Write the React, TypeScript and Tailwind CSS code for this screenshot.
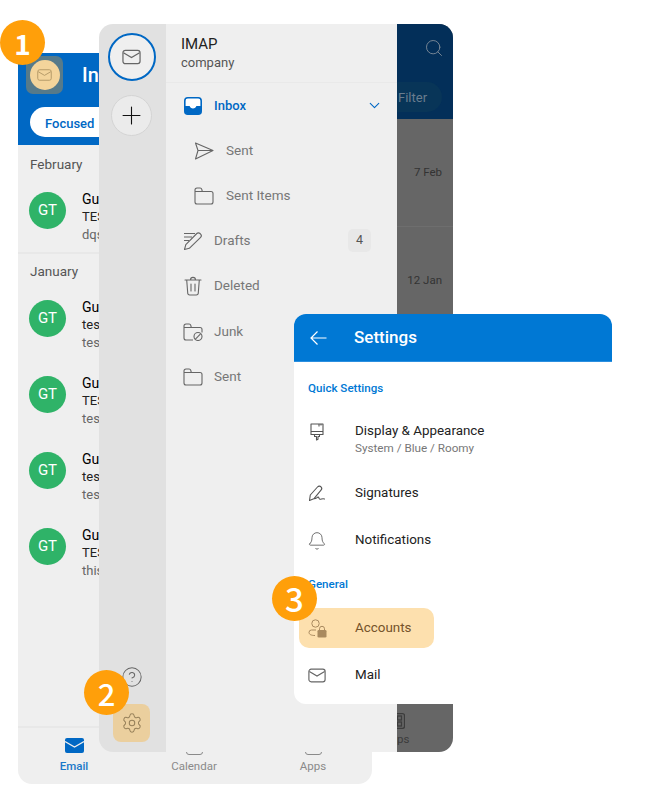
import React from 'react';
import { Bell, ChevronDown, CircleHelp, Plus, Search, Settings } from 'lucide-react';

// Small outline icons that the icon packages don't have in this shape
const MailIcon = ({ className }: { className?: string }) => (
  <svg viewBox="0 0 20 16" fill="none" stroke="currentColor" strokeWidth="1.3" className={className}>
    <rect x="1" y="1" width="18" height="14" rx="2.5" />
    <path d="M1.5 3.5 10 8.5l8.5-5" />
  </svg>
);

const InboxIcon = () => (
  <svg viewBox="0 0 18 18" className="w-[18px] h-[18px] text-[#0068c4]">
    <rect x="0.8" y="0.8" width="16.4" height="16.4" rx="3" fill="#fff" stroke="currentColor" strokeWidth="1.6" />
    <path d="M1 9h4.6c.5 1.6 1.7 2.4 3.4 2.4s2.900-.8 3.400-2.400H17v5.500a2.500 2.500 0 0 1-2.500 2.500h-11A2.500 2.500 0 0 1 1 14.500z" fill="currentColor" />
  </svg>
);

const SendIcon = () => (
  <svg viewBox="0 0 20 18" fill="none" stroke="currentColor" strokeWidth="1.1" strokeLinejoin="round" className="w-5 h-[18px]">
    <path d="M1.500 1 19 8.500 1.500 17l2.500-8.500zM4 8.500h15" />
  </svg>
);

const FolderIcon = () => (
  <svg viewBox="0 0 20 18" fill="none" stroke="currentColor" strokeWidth="1.1" className="w-5 h-[18px]">
    <path d="M1 4.500V3a2 2 0 0 1 2-2h3.200c.8 0 1.300.5 1.500 1.200l.6 2.300H17a2 2 0 0 1 2 2V15a2 2 0 0 1-2 2H3a2 2 0 0 1-2-2zh7.300" />
  </svg>
);

const DraftsIcon = () => (
  <svg viewBox="0 0 20 20" fill="none" stroke="currentColor" strokeWidth="1.1" strokeLinejoin="round" className="w-5 h-5">
    <path d="M1 2.500h11M1 6h8M1 9.500h5M1.500 18.500l1.300-4.800L13.800 2.500c.9-.9 2.300-.9 3.200 0l.6.6c.9.9.9 2.300 0 3.200L6.300 17.300z" />
  </svg>
);

const TrashIcon = () => (
  <svg viewBox="0 0 18 20" fill="none" stroke="currentColor" strokeWidth="1.1" strokeLinecap="round" className="w-[18px] h-5">
    <path d="M1 4h16M6.500 4c0-3.500 5-3.500 5 0M2.700 4l1 12.800A2 2 0 0 0 5.700 19h6.600a2 2 0 0 0 2-2.200l1-12.800M7 8v7M11 8v7" />
  </svg>
);

const JunkIcon = () => (
  <svg viewBox="0 0 20 18" fill="none" stroke="currentColor" strokeWidth="1.1" className="w-5 h-[18px]">
    <path d="M10 17H3a2 2 0 0 1-2-2V3a2 2 0 0 1 2-2h3.200c.8 0 1.300.5 1.500 1.200l.6 2.300H17a2 2 0 0 1 2 2v3M1 4.500h7.300" />
    <circle cx="15" cy="13.500" r="4" />
    <path d="m12.200 16.300 5.600-5.600" />
  </svg>
);

const BrushIcon = () => (
  <svg viewBox="0 0 14 18" fill="none" stroke="currentColor" strokeWidth="1.1" strokeLinejoin="round" className="w-[14px] h-[18px]">
    <path d="M1 1h12v10.500H1zM1 8.500h12M4.500 11.500v2h2v3.500l1.500-.8v-2.700h1.500v-2M9 1v2.500M11 1v1.500" />
  </svg>
);

const SignatureIcon = () => (
  <svg viewBox="0 0 18 17" fill="none" stroke="currentColor" strokeWidth="1.1" strokeLinejoin="round" strokeLinecap="round" className="w-[18px] h-[17px]">
    <path d="M1.500 15.500 2.300 10 9.500 2c1-1.100 2.500-1.200 3.500-.2s.9 2.400 0 3.400L5.800 13.800zM5.800 13.800C8 14 9 12.500 10 12c1-.4.600 2 2 2.300 1.400.2 2-1 4.500-.3" />
  </svg>
);

const AccountLockIcon = () => (
  <svg viewBox="0 0 19 19" className="w-[19px] h-[19px]">
    <circle cx="7.500" cy="4.500" r="3.700" fill="none" stroke="currentColor" strokeWidth="1" />
    <path d="M8 11H3.500A2.500 2.500 0 0 0 1 13.500c0 2 2.500 3 6 3" fill="none" stroke="currentColor" strokeWidth="1" />
    <rect x="9.500" y="11" width="9" height="7.500" rx="1.300" fill="currentColor" />
    <path d="M11.500 11V9.800a2.500 2.500 0 0 1 5 0V11" fill="none" stroke="currentColor" strokeWidth="1" />
  </svg>
);

const Badge = ({ n, className }: { n: number; className: string }) => (
  <div className={`absolute w-[45px] h-[45px] rounded-full bg-[#ff9f0a] text-white flex items-center justify-center leading-none font-['Noto_Sans_CJK_KR',sans-serif] ${className}`}>
    {n}
  </div>
);

const mails = [
  { month: 'February', rows: [['TES', 'dqs']] },
  { month: 'January', rows: [['tes', 'tes'], ['TES', 'tes'], ['tes', 'tes'], ['TES', 'this']] },
];

const folders = [
  { name: 'Inbox', icon: <InboxIcon />, active: true },
  { name: 'Sent', icon: <SendIcon />, sub: true },
  { name: 'Sent Items', icon: <FolderIcon />, sub: true },
  { name: 'Drafts', icon: <DraftsIcon />, count: 4 },
  { name: 'Deleted', icon: <TrashIcon /> },
  { name: 'Junk', icon: <JunkIcon />, nudge: true },
  { name: 'Sent', icon: <FolderIcon /> },
];

function MailList() {
  return (
    <div className="absolute left-[18px] top-[53px] w-[354px] h-[731px] bg-[#efefef] rounded-b-[14px] flex flex-col overflow-hidden">
      <div className="h-[92px] bg-[#0068c4] shrink-0 relative">
        <div className="absolute left-[8px] top-[3px] w-[37px] h-[38px] rounded-[7px] bg-[#567a8a] flex items-center justify-center">
          <div className="w-[30px] h-[30px] rounded-full bg-[#f3d49b] flex items-center justify-center text-[#b49a68]">
            <MailIcon className="w-[15px] h-[12px]" />
          </div>
        </div>
        <div className="absolute left-[64px] top-[10px] text-white text-[20px] font-medium leading-[24px]">In</div>
        <div className="absolute left-[12px] top-[54px] w-[90px] h-[30px] rounded-full bg-white pl-[15px] pt-[3px] flex items-center text-[#0068c4] text-[13px] font-medium">
          Focused
        </div>
      </div>
      <div className="flex-1 flex flex-col">
        {mails.map((group, i) => (
          <div key={group.month} className={i > 0 ? 'border-t-2 border-[#e8e8e8]' : ''}>
            <div className={`pl-[12px] text-[13.500px] leading-[18px] text-[#555] ${i > 0 ? 'h-[36px] pt-[8px]' : 'h-[37px] pt-[10px]'}`}>{group.month}</div>
            {group.rows.map((row, j) => (
              <div key={j} className={`flex items-start pl-[11px] pt-[10px] ${i > 0 ? 'h-[76px]' : 'h-[70px]'}`}>
                <div className="w-[37px] h-[37px] rounded-full bg-[#2fb368] text-white text-[15px] flex items-center justify-center shrink-0">GT</div>
                <div className="ml-[16px] -mt-[2px] text-[14px] leading-[18px]">
                  <div className="text-black">Gu</div>
                  <div className="text-[#222] text-[13px]">{row[0]}</div>
                  <div className="text-[#666] text-[13px]">{row[1]}</div>
                </div>
              </div>
            ))}
          </div>
        ))}
      </div>
      <div className="h-[58px] border-t-2 border-[#e8e8e8] flex shrink-0 text-[11.500px] pt-[10px]">
        <div className="w-[112px] flex flex-col items-center text-[#1a78c9] font-medium">
          <svg viewBox="0 0 19 15" className="w-[19px] h-[15px]">
            <rect width="19" height="15" rx="2" fill="#0068c4" />
            <path d="M0 3.500 9.500 9 19 3.500" fill="none" stroke="#efefef" strokeWidth="1.300" />
          </svg>
          <span className="leading-[16px] mt-[5px]">Email</span>
        </div>
        <div className="w-[128px] flex flex-col items-center text-[#8a8a8a]">
          <div className="w-[17px] h-[17px] border border-[#8a8a8a] rounded-[3px]" />
          <span className="leading-[16px] mt-[3px]">Calendar</span>
        </div>
        <div className="w-[110px] flex flex-col items-center text-[#8a8a8a]">
          <div className="w-[17px] h-[17px] border border-[#8a8a8a] rounded-[3px]" />
          <span className="leading-[16px] mt-[3px]">Apps</span>
        </div>
      </div>
    </div>
  );
}

function Drawer() {
  return (
    <div className="absolute left-[99px] top-[24px] w-[354px] h-[728px] rounded-[14px] overflow-hidden flex">
      <div className="w-[67px] bg-[#e1e1e1] flex flex-col items-center pt-[9px] pb-[10px] pr-[2px] shrink-0">
        <div className="w-[48px] h-[48px] rounded-full border-2 border-[#0068c4] bg-[#efefef] flex items-center justify-center text-[#666]">
          <MailIcon className="w-[19px] h-[16px]" />
        </div>
        <div className="mt-[14px] w-[41px] h-[41px] rounded-full border border-[#d4d4d4] bg-[#ebebeb] flex items-center justify-center text-[#111]">
          <Plus size={29} strokeWidth={0.9} />
        </div>
        <CircleHelp size={22} strokeWidth={1.1} className="mt-auto text-[#666]" />
        <div className="mt-[16px] w-[37px] h-[38px] rounded-[8px] bg-[#ebcf9e] flex items-center justify-center text-[#96805a]">
          <Settings size={22} strokeWidth={1.1} />
        </div>
      </div>

      <div className="w-[231px] bg-[#efefef] shrink-0 flex flex-col">
        <div className="h-[59px] border-b border-[#e9e9e9] pl-[15px] pt-[11px]">
          <div className="text-[15px] leading-[18px] text-[#222]">IMAP</div>
          <div className="text-[13px] leading-[19px] text-[#555]">company</div>
        </div>
        {folders.map((f, i) => (
          <div key={i} className={`h-[45px] flex items-center shrink-0 ${f.sub ? 'pl-[28px]' : 'pl-[17px]'} ${f.nudge ? 'mt-[1px]' : ''}`}>
            <div className="w-[20px] flex justify-center text-[#666]">{f.icon}</div>
            {f.active ? (
              <span className="ml-[11px] text-[13px] text-[#0068c4] font-medium">{f.name}</span>
            ) : (
              <span className={`text-[13.500px] text-[#777] ${f.sub ? 'ml-[12px]' : 'ml-[11px]'}`}>{f.name}</span>
            )}
            {f.active && <ChevronDown size={17} strokeWidth={1.6} className="ml-auto mr-[14px] text-[#0068c4]" />}
            {f.count && (
              <div className="ml-auto mr-[26px] w-[23px] h-[23px] rounded-[5px] bg-[#e8e8e8] flex items-center justify-center text-[12.500px] text-[#555]">{f.count}</div>
            )}
          </div>
        ))}
      </div>

      {/* what is left of the dimmed inbox behind the drawer */}
      <div className="flex-1 bg-[#666] flex flex-col overflow-hidden">
        <div className="h-[95px] bg-[#032f59] relative shrink-0">
          <Search size={20} strokeWidth={1.1} className="absolute left-[27px] top-[14px] text-[#7f8c99]" />
          <div className="absolute left-0 top-[58px] w-[45px] h-[30px] rounded-r-full bg-[#083558] pl-[1px] pt-[1px] flex items-center text-[13px] text-[#6a7d8e]">Filter</div>
        </div>
        <div className="h-[108px] border-b border-[#6e6e6e] pt-[44px] pr-[11px] text-right text-[11.500px] leading-[18px] text-[#333]">7 Feb</div>
        <div className="pt-[44px] pr-[11px] text-right text-[11.500px] leading-[18px] text-[#333]">12 Jan</div>
        <div className="mt-auto pb-[6px] flex flex-col items-start text-[11.500px] leading-[14px] text-[#3c3c3c]">
          <svg viewBox="0 0 8 16" fill="none" stroke="currentColor" strokeWidth="1.300" className="w-2 h-4 mb-[3px]">
            <path d="M0 .7h5.500a2 2 0 0 1 2 2v10.600a2 2 0 0 1-2 2H0" />
            <rect x="0.500" y="3" width="4" height="4" />
            <rect x="0.500" y="9" width="4" height="4" />
          </svg>
          <span>ps</span>
        </div>
      </div>
    </div>
  );
}

function SettingsPanel() {
  return (
    <div className="absolute left-[294px] top-[314px] w-[318px] h-[390px] bg-white rounded-[12px] flex flex-col overflow-hidden">
      <div className="h-[48px] bg-[#0078d4] border-b border-[#2b8fdf] flex items-center pl-[16px] shrink-0 text-white">
        <svg viewBox="0 0 17 14" fill="none" stroke="currentColor" strokeWidth="1.200" className="w-[17px] h-[14px]">
          <path d="M16.500 7H1M7.500.5 1 7l6.500 6.500" />
        </svg>
        <span className="ml-[27px] mt-[1px] text-[17px] font-medium">Settings</span>
      </div>
      <div className="h-[47px] pl-[14px] pt-[18px] text-[11.600px] leading-[16px] font-medium text-[#0078d4] shrink-0">Quick Settings</div>
      <div className="h-[61px] flex items-center pl-[11px] pb-[1px] shrink-0">
        <div className="w-[24px] flex justify-center text-[#555] -mt-[14px]"><BrushIcon /></div>
        <div className="ml-[26px]">
          <div className="text-[13.400px] leading-[18px] text-[#222]">Display &amp; Appearance</div>
          <div className="text-[11.700px] leading-[16px] text-[#777]">System / Blue / Roomy</div>
        </div>
      </div>
      <div className="h-[47px] flex items-center pl-[11px] shrink-0">
        <div className="w-[24px] flex justify-center text-[#555]"><SignatureIcon /></div>
        <span className="ml-[26px] text-[13.400px] text-[#222]">Signatures</span>
      </div>
      <div className="h-[47px] flex items-center pl-[11px] shrink-0">
        <div className="w-[24px] flex justify-center text-[#555]"><Bell size={20} strokeWidth={1} /></div>
        <span className="ml-[26px] text-[13.400px] text-[#222]">Notifications</span>
      </div>
      <div className="h-[44px] pl-[14px] pt-[12px] text-[11.600px] leading-[16px] font-medium text-[#0078d4] shrink-0">General</div>
      <div className="ml-[5px] w-[135px] h-[40px] rounded-[10px] bg-[#fde0ae] flex items-center pl-[6px] shrink-0 text-[#75532b]">
        <div className="w-[24px] flex justify-center text-[#a98a5f]"><AccountLockIcon /></div>
        <span className="ml-[26px] text-[13.400px]">Accounts</span>
      </div>
      <div className="h-[54px] flex items-center pl-[11px] shrink-0">
        <div className="w-[24px] flex justify-center text-[#666]"><MailIcon className="w-[18px] h-[15px]" /></div>
        <span className="ml-[26px] text-[13.400px] text-[#222]">Mail</span>
      </div>
    </div>
  );
}

export default function App() {
  return (
    <div className="relative w-[650px] h-[800px] bg-white overflow-hidden font-['Roboto',sans-serif]">
      <MailList />
      <Drawer />
      <SettingsPanel />
      <Badge n={1} className="left-0 top-[20px] text-[28px] font-bold" />
      <Badge n={2} className="left-[84px] top-[670px] text-[31px] font-medium" />
      <Badge n={3} className="left-[272px] top-[576px] text-[33px] font-medium" />
    </div>
  );
}
